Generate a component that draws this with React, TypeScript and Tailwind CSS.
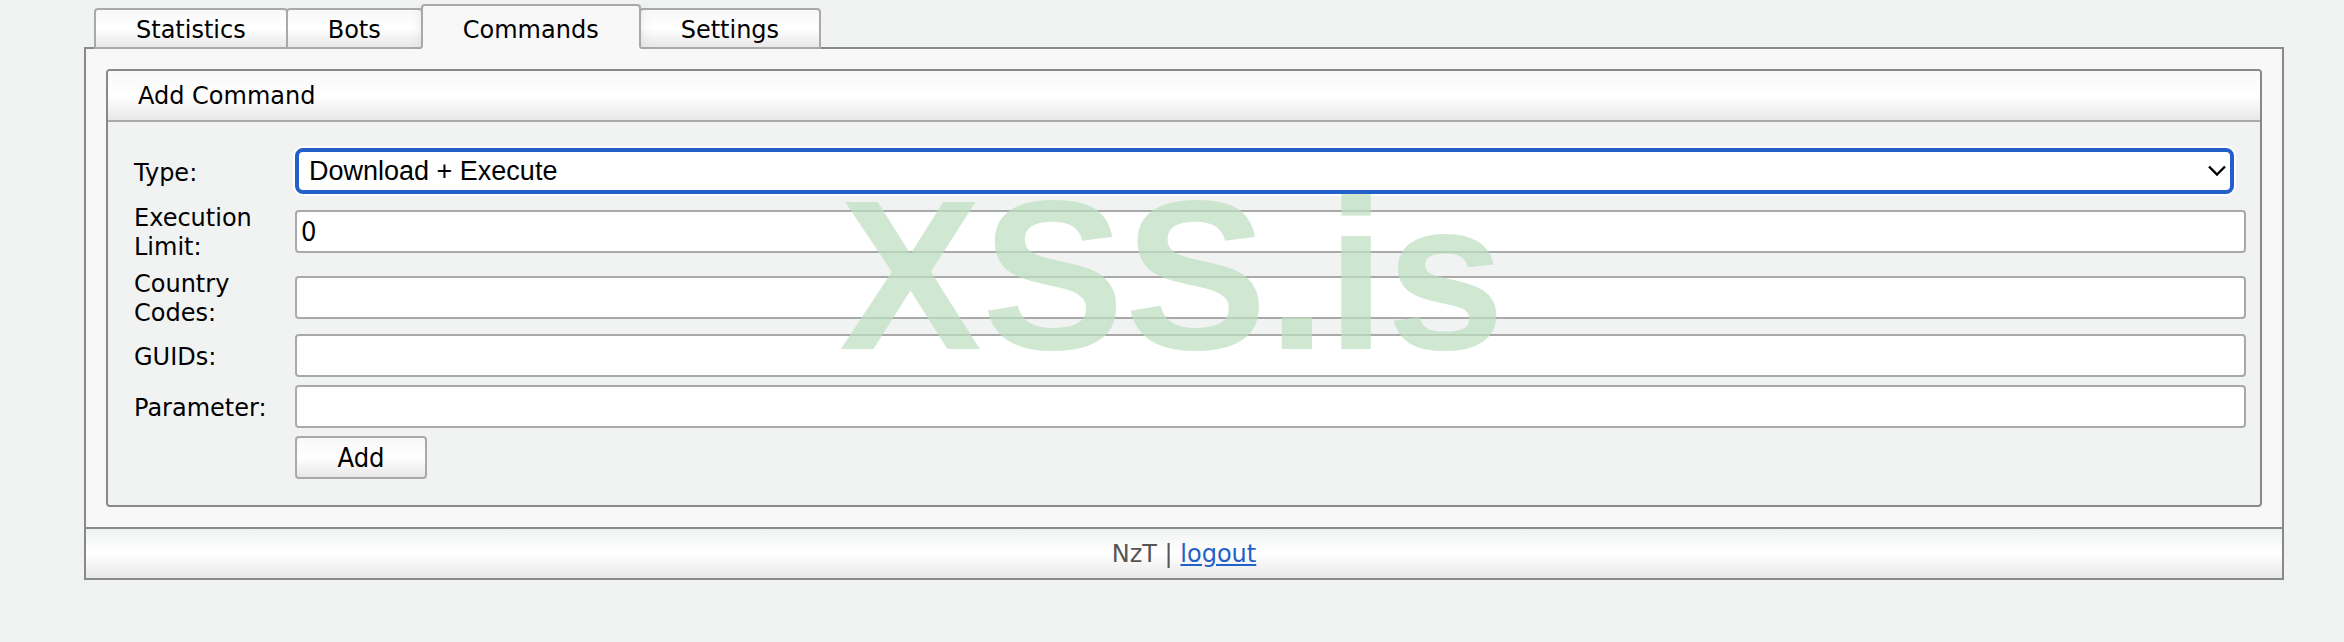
import React from "react"

const tabs = ["Statistics", "Bots", "Commands", "Settings"]

const fields = [
  { id: "limit", label: "Execution Limit:", value: "0" },
  { id: "countries", label: "Country Codes:", value: "" },
  { id: "guids", label: "GUIDs:", value: "" },
  { id: "parameter", label: "Parameter:", value: "" },
]

function Tab({ name, active }: { name: string; active: boolean }) {
  const base = "-mr-0.5 block rounded-t border-2 border-[#a9a9a9] px-10 "
  return (
    <a
      href="#"
      className={
        base +
        (active
          ? "relative border-b-[#f8f8f8] bg-[#f8f8f8] pt-2.5 pb-0.5 shadow-[0_0_12px_rgba(0,60,0,0.1)] [clip-path:inset(0_-12px_0_-12px)]"
          : "bg-linear-to-b from-[#f8f8f8] via-white to-[#e8e8e8] pt-1.5 pb-0.5")
      }
    >
      {name}
    </a>
  )
}

export default function App() {
  return (
    <div className="relative min-h-screen bg-[#f1f3f3] pt-1 pr-[60px] pl-[84px] font-['DejaVu_Sans',sans-serif] text-[24px] leading-[29px] text-black">
      <nav className="relative z-10 -mb-0.5 flex items-end pl-2.5">
        {tabs.map((name) => (
          <Tab key={name} name={name} active={name === "Commands"} />
        ))}
      </nav>

      <main className="border-2 border-[#888a89] bg-[#f8f8f8] p-5">
        <section className="overflow-hidden rounded border-2 border-[#888a89] bg-[#f1f3f3]">
          <h1 className="border-b-2 border-[#a9a9a9] bg-linear-to-b from-[#f8f8f8] via-white to-[#e8e8e8] px-[30px] pt-[11px] pb-[9px]">
            Add Command
          </h1>
          <form className="grid grid-cols-[129px_1fr] items-center gap-x-8 gap-y-2 py-[26px] pr-3.5 pl-[26px]">
            <label htmlFor="type" className="-mb-0.5 pt-0.5">
              Type:
            </label>
            <div className="relative mr-3">
              <select
                id="type"
                className="block h-[46px] w-full appearance-none rounded-lg border-4 border-[#2360c8] bg-white px-2.5 font-['Liberation_Sans',sans-serif] text-[27px] leading-8 ring-2 ring-white outline-none"
              >
                <option>Download + Execute</option>
              </select>
              <svg
                className="pointer-events-none absolute top-[17px] right-2 h-3 w-[18px]"
                viewBox="0 0 18 12"
                fill="none"
                stroke="black"
                strokeWidth="2.4"
              >
                <path d="M1 1.5 L9 9.5 L17 1.5" />
              </svg>
            </div>

            {fields.map((field) => (
              <React.Fragment key={field.id}>
                <label htmlFor={field.id} className="-mb-0.5 pt-0.5">
                  {field.label}
                </label>
                <input
                  id={field.id}
                  type="text"
                  defaultValue={field.value}
                  className="h-[43px] w-full rounded border-2 border-[#a9a9a9] bg-white px-1 font-['DejaVu_Sans_Condensed','DejaVu_Sans',sans-serif] text-[27px]"
                />
              </React.Fragment>
            ))}

            <button
              type="submit"
              className="col-start-2 h-[43px] w-[132px] rounded border-2 border-[#a9a9a9] bg-linear-to-b from-[#f8f8f8] via-white to-[#e8e8e8] font-['DejaVu_Sans_Condensed','DejaVu_Sans',sans-serif] text-[27px]"
            >
              Add
            </button>
          </form>
        </section>
      </main>

      <footer className="border-2 border-t-0 border-[#888a89] bg-linear-to-b from-[#f1f3f3] via-white to-[#e8e8e8] pt-[11px] pb-[9px] text-center text-[#555]">
        NzT |{" "}
        <a href="#" className="text-[#2360c8] underline">
          logout
        </a>
      </footer>

      {/* watermark */}
      <div className="pointer-events-none absolute inset-x-0 top-[156px] z-20 text-center font-['Liberation_Sans',sans-serif] text-[214px] leading-[238px] font-bold text-[#bedfc0]/72">
        XSS.is
      </div>
    </div>
  )
}
